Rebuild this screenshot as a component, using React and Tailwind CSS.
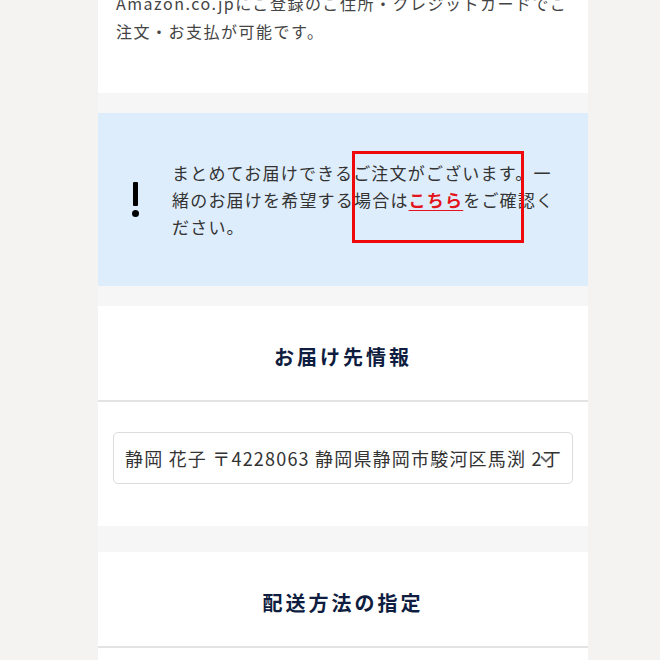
import React from "react";

const jp = { fontFamily: '"Noto Sans CJK JP", "Noto Sans", sans-serif' };

function SectionHeader({ title }) {
  return (
    <div className="h-[96px] pt-[8px] flex items-center justify-center border-b-2 border-[#e3e3e3]">
      <h2 className="text-[20px] font-bold tracking-[3px] text-[#0f1d40]">{title}</h2>
    </div>
  );
}

export default function App() {
  return (
    <div className="min-h-screen bg-[#f4f3f2] overflow-hidden" style={jp}>
      <div className="w-[490px] ml-[98px] bg-[#f6f6f6] h-[660px] overflow-hidden">
        {/* Payment notice (scrolled partly off screen) */}
        <div className="bg-white mt-[-11px] px-[18px] pb-[48px] text-[16px] leading-[28px] tracking-[1.5px] text-[#444]">
          <p className="whitespace-nowrap">
            Amazon.co.jpにご登録のご住所・クレジットカードでご
            <br />
            注文・お支払が可能です。
          </p>
        </div>

        {/* Combined delivery alert */}
        <div className="relative mt-[20px] h-[173px] bg-[#deedfc] flex items-center pl-[32px]">
          <div className="w-[10px] flex flex-col items-center shrink-0">
            <div className="w-[5px] h-[24px] bg-black rounded-[1px]" />
            <div className="w-[7px] h-[7px] mt-[4px] bg-black rounded-full" />
          </div>
          <p className="ml-[32px] w-[392px] text-[17px] leading-[27px] tracking-[1.2px] text-[#333]">
            まとめてお届けできるご注文がございます。一緒のお届けを希望する場合は
            <a className="text-[#e3141b] font-bold underline underline-offset-[3px]">こちら</a>
            をご確認ください。
          </p>
          <div className="absolute left-[254px] top-[38px] w-[172px] h-[92px] border-[3px] border-[#ee0a0a]" />
        </div>

        {/* Delivery address */}
        <div className="mt-[20px] bg-white">
          <SectionHeader title="お届け先情報" />
          <div className="px-[15px] pt-[30px] pb-[42px]">
            <div className="relative h-[52px] border border-[#dcdcdc] rounded-[5px] flex items-center pl-[11px] pr-[10px] overflow-hidden">
              <span className="whitespace-nowrap overflow-hidden text-[18px] tracking-[1.2px] text-[#333]">
                静岡 花子 〒4228063 静岡県静岡市駿河区馬渕 2丁目
              </span>
              <svg
                className="absolute z-10 left-[426px] top-[22px]"
                width="12"
                height="8"
                viewBox="0 0 12 8"
                fill="none"
                stroke="#666"
                strokeWidth="1.8"
              >
                <path d="M1 1.5l5 5 5-5" />
              </svg>
            </div>
          </div>
        </div>

        {/* Delivery method */}
        <div className="mt-[26px] bg-white h-[200px]">
          <SectionHeader title="配送方法の指定" />
        </div>
      </div>
    </div>
  );
}
